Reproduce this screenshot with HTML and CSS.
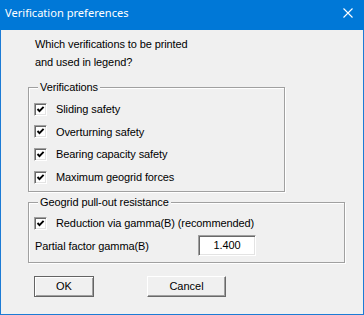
FILE: index.html
```html
<!DOCTYPE html>
<html lang="en">
<head>
  <meta charset="UTF-8">
  <title>Verification preferences</title>
  <link rel="stylesheet" href="styles.css">
</head>
<body>

  <div class="dialog">
    <!-- Title bar -->
    <div class="titlebar">
      <span class="title">Verification preferences</span>
      <svg class="close" width="10" height="10" viewBox="0 0 10 10">
        <path d="M0.5 0.5 L9.5 9.5 M9.5 0.5 L0.5 9.5" stroke="#fff" stroke-width="1.1" fill="none"/>
      </svg>
    </div>

    <div class="body">
      <p class="prompt">Which verifications to be printed<br>and used in legend?</p>

      <!-- Verifications -->
      <div class="group group-verif">
        <div class="group-title">Verifications</div>
        <div class="rows">
          <label class="row"><span class="check"><svg width="11" height="11" viewBox="0 0 11 11"><path d="M2.5 5 L4.5 7.2 L8.6 2.8" stroke="#000" stroke-width="1.9" fill="none"/></svg></span>Sliding safety</label>
          <label class="row"><span class="check"><svg width="11" height="11" viewBox="0 0 11 11"><path d="M2.5 5 L4.5 7.2 L8.6 2.8" stroke="#000" stroke-width="1.9" fill="none"/></svg></span>Overturning safety</label>
          <label class="row"><span class="check"><svg width="11" height="11" viewBox="0 0 11 11"><path d="M2.5 5 L4.5 7.2 L8.6 2.8" stroke="#000" stroke-width="1.9" fill="none"/></svg></span>Bearing capacity safety</label>
          <label class="row"><span class="check"><svg width="11" height="11" viewBox="0 0 11 11"><path d="M2.5 5 L4.5 7.2 L8.6 2.8" stroke="#000" stroke-width="1.9" fill="none"/></svg></span>Maximum geogrid forces</label>
        </div>
      </div>

      <!-- Geogrid -->
      <div class="group group-geogrid">
        <div class="group-title">Geogrid pull-out resistance</div>
        <div class="rows">
          <label class="row"><span class="check"><svg width="11" height="11" viewBox="0 0 11 11"><path d="M2.5 5 L4.5 7.2 L8.6 2.8" stroke="#000" stroke-width="1.9" fill="none"/></svg></span>Reduction via gamma(B) (recommended)</label>
          <div class="row field">
            <span class="field-label">Partial factor gamma(B)</span>
            <span class="input">1.400</span>
          </div>
        </div>
      </div>

      <div class="buttons">
        <button class="btn btn-default">OK</button>
        <button class="btn btn-cancel">Cancel</button>
      </div>
    </div>
  </div>

</body>
</html>
```

FILE: styles.css
```css
/* General */
body {
  margin: 0;
  padding: 0;
  background-color: #f0f0f0;
  font-family: "Liberation Sans", Arial, sans-serif;
  font-size: 11px;
  color: #000;
}

.dialog {
  width: 364px;
  height: 315px;
  box-sizing: border-box;
  border: 1px solid #1c7bd5;
  border-top: none;
  background-color: #f0f0f0;
}

/* Title bar */
.titlebar {
  height: 30px;
  margin: 0 -1px;
  background-color: #0078d7;
  display: flex;
  align-items: flex-start;
  justify-content: space-between;
}

.titlebar .title {
  font-family: "Noto Sans", sans-serif;
  font-size: 11.1px;
  line-height: 16px;
  color: white;
  padding: 5px 0 0 5px;
}

.titlebar .close {
  margin: 8px 11px 0 0;
}

/* Body */
.body {
  padding-left: 27px;
}

.prompt {
  margin: 5px 0 0 7px;
  line-height: 18px;
  letter-spacing: -0.1px;
}

.group {
  border: 1px solid #a0a0a0;
  box-shadow: 1px 1px 0 #fff, inset 1px 1px 0 #fff;
}

.group-verif {
  width: 257px;
  box-sizing: border-box;
  margin-top: 16px;
  padding-bottom: 2.6px;
}

.group-geogrid {
  width: 317px;
  box-sizing: border-box;
  margin-top: 10px;
  padding-bottom: 5px;
}

.group-title {
  width: fit-content;
  margin: -8px 0 0 9px;
  padding: 0 2px;
  line-height: 14px;
  background-color: #f0f0f0;
  letter-spacing: -0.1px;
}

.rows {
  padding: 4px 0 0 5px;
}

.group-geogrid .rows {
  padding-top: 3px;
}

.row {
  height: 22.6px;
  display: flex;
  align-items: center;
  letter-spacing: -0.1px;
}

.check {
  width: 13px;
  height: 13px;
  box-sizing: border-box;
  margin-right: 9px;
  border: 1px solid;
  border-color: #a0a0a0 #fff #fff #a0a0a0;
  box-shadow: inset 1px 1px 0 #696969, inset -1px -1px 0 #e3e3e3;
  background-color: #fff;
  display: flex;
}

.field {
  height: 22px;
  padding-left: 1px;
}

.field-label {
  width: 163px;
}

.input {
  width: 58px;
  height: 21px;
  box-sizing: border-box;
  line-height: 19px;
  text-align: center;
  background-color: #fff;
  border: 1px solid;
  border-color: #a0a0a0 #fff #fff #a0a0a0;
  box-shadow: inset 1px 1px 0 #696969, inset -1px -1px 0 #e3e3e3;
}

/* Buttons */
.buttons {
  display: flex;
  margin-top: 13px;
  padding-left: 6px;
}

.btn {
  height: 21px;
  padding: 0;
  font-family: "Liberation Sans", Arial, sans-serif;
  font-size: 11px;
  color: #000;
  background-color: #f0f0f0;
  box-sizing: border-box;
}

.btn-default {
  width: 60px;
  border: 1px solid #646464;
  box-shadow: inset 1px 1px 0 #fff, inset -1px -1px 0 #a0a0a0;
}

.btn-cancel {
  width: 79px;
  margin-left: 53px;
  border: 1px solid;
  border-color: #fff #696969 #696969 #fff;
  box-shadow: inset -1px -1px 0 #a0a0a0;
}
```
